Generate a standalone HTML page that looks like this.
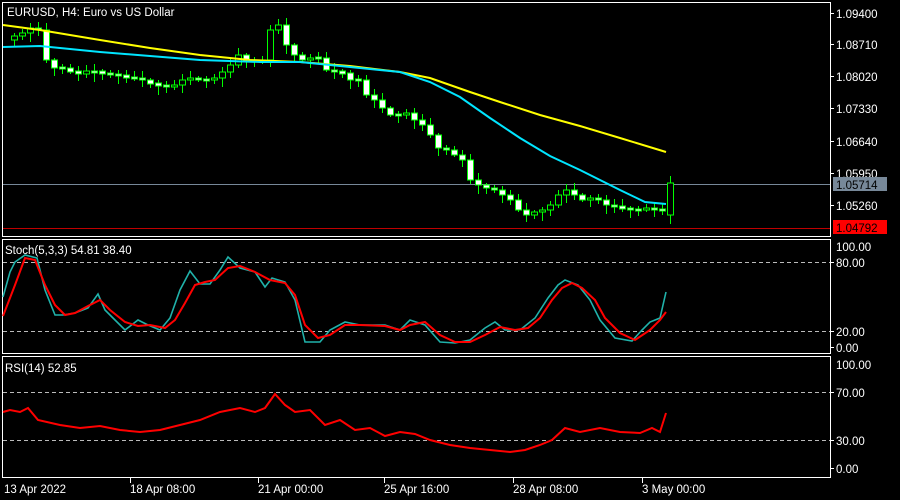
<!DOCTYPE html>
<html><head><meta charset="utf-8"><style>
body{margin:0;background:#000;width:900px;height:500px;overflow:hidden}
svg{display:block}
text{font-family:"Liberation Sans",sans-serif;font-size:11.5px;fill:#fff}
</style></head><body>
<svg id="s" width="900" height="500" xmlns="http://www.w3.org/2000/svg">
<rect width="900" height="500" fill="#000"/>
<rect x="2.5" y="2.5" width="828" height="234" fill="none" stroke="#fff"/>
<rect x="2.5" y="239.5" width="828" height="114" fill="none" stroke="#fff"/>
<rect x="2.5" y="356.5" width="828" height="121" fill="none" stroke="#fff"/>
<line x1="3" y1="184.5" x2="830" y2="184.5" stroke="#778899"/>
<line x1="3" y1="228.5" x2="830" y2="228.5" stroke="#ff0000" stroke-width="0.8"/>
<g stroke="#bbb" stroke-dasharray="4,3">
<line x1="3" y1="262.5" x2="830" y2="262.5"/><line x1="3" y1="331.5" x2="830" y2="331.5"/>
<line x1="3" y1="392.5" x2="830" y2="392.5"/><line x1="3" y1="440.5" x2="830" y2="440.5"/>
</g>
<g id="candles"></g>
<polyline fill="none" stroke="#ffff00" stroke-width="2" points="3,25 40,30 100,40 150,48 200,55 250,60 300,62 350,66 400,72 430,78 470,92 500,102 540,115 580,126 620,138 666,152"/>
<polyline fill="none" stroke="#00e5ff" stroke-width="2" points="3,47 40,46 60,48 100,52 150,56 200,60 260,62 300,62 350,67 400,72 430,82 460,97 490,118 520,138 550,156 580,170 620,190 645,202 666,204"/>
<polyline fill="none" stroke="#20b2aa" stroke-width="1.6" points="3,297 10,272 15,262 25,255 37,258 45,290 55,315 63,315 75,313 88,308 98,294 105,310 115,320 125,330 138,320 148,325 160,330 170,318 180,290 190,271 200,284 210,284 220,270 228,257 240,268 255,272 265,287 272,278 285,282 295,300 305,342 320,342 330,330 345,322 360,325 385,325 400,330 410,320 425,325 440,342 455,343 470,340 485,328 495,322 505,330 520,330 535,318 548,298 558,285 565,280 578,285 590,300 600,320 615,338 632,341 642,330 650,322 660,318 666,292"/>
<polyline fill="none" stroke="#ff0000" stroke-width="2" points="3,316 15,285 25,258 35,260 45,285 55,305 65,315 75,313 88,306 100,300 110,310 125,322 138,326 150,325 165,328 175,320 185,303 195,285 205,282 215,280 228,268 240,266 255,272 270,280 285,283 295,295 305,325 318,338 330,335 345,325 360,325 385,326 400,330 410,325 425,322 440,335 455,342 470,342 485,335 500,327 515,330 528,328 540,318 552,300 562,288 572,283 582,288 595,300 605,318 620,333 635,340 650,330 660,320 666,312"/>
<polyline fill="none" stroke="#ff0000" stroke-width="2" points="3,412 10,410 20,412 28,408 38,420 60,425 80,428 100,426 120,430 140,432 160,430 180,425 200,420 220,412 240,408 255,412 265,408 275,394 285,405 295,412 310,410 325,425 340,420 355,430 370,428 385,436 400,432 415,434 430,440 450,445 470,448 490,450 510,452 525,450 540,445 552,440 565,428 580,432 600,428 620,432 640,433 652,428 660,432 666,413"/>
<g stroke="#fff">
<line x1="830" y1="13.5" x2="834" y2="13.5"/><line x1="830" y1="44.5" x2="834" y2="44.5"/><line x1="830" y1="76.5" x2="834" y2="76.5"/><line x1="830" y1="108.5" x2="834" y2="108.5"/><line x1="830" y1="141.5" x2="834" y2="141.5"/><line x1="830" y1="173.5" x2="834" y2="173.5"/><line x1="830" y1="205.5" x2="834" y2="205.5"/>
<line x1="830" y1="262.5" x2="834" y2="262.5"/><line x1="830" y1="331.5" x2="834" y2="331.5"/><line x1="830" y1="347.5" x2="834" y2="347.5"/>
<line x1="830" y1="392.5" x2="834" y2="392.5"/><line x1="830" y1="440.5" x2="834" y2="440.5"/><line x1="830" y1="468.5" x2="834" y2="468.5"/>
<line x1="130.5" y1="478" x2="130.5" y2="483"/><line x1="258.5" y1="478" x2="258.5" y2="483"/><line x1="384.5" y1="478" x2="384.5" y2="483"/><line x1="513.5" y1="478" x2="513.5" y2="483"/><line x1="642.5" y1="478" x2="642.5" y2="483"/>
</g>
<g>
<text x="836" y="18">1.09400</text><text x="836" y="49">1.08710</text><text x="836" y="81">1.08020</text><text x="836" y="113">1.07330</text><text x="836" y="146">1.06640</text><text x="836" y="178">1.05950</text><text x="836" y="210">1.05260</text>
<rect x="833" y="177" width="54" height="14" fill="#778899"/><text x="836" y="189" style="fill:#000">1.05714</text>
<rect x="833" y="220" width="54" height="14" fill="#ff0000"/><text x="836" y="232" style="fill:#000">1.04792</text>
<text x="836" y="251">100.00</text><text x="836" y="267">80.00</text><text x="836" y="336">20.00</text><text x="836" y="352">0.00</text>
<text x="836" y="369">100.00</text><text x="836" y="397">70.00</text><text x="836" y="445">30.00</text><text x="836" y="473">0.00</text>
<text x="4" y="493">13 Apr 2022</text><text x="130" y="493">18 Apr 08:00</text><text x="258" y="493">21 Apr 00:00</text><text x="384" y="493">25 Apr 16:00</text><text x="513" y="493">28 Apr 08:00</text><text x="642" y="493">3 May 00:00</text>
<text x="7" y="16">EURUSD, H4:  Euro vs US Dollar</text>
<text x="5" y="254">Stoch(5,3,3) 54.81 38.40</text>
<text x="5" y="372">RSI(14) 52.85</text>
</g>
</svg>
<script>
var m=[40,36,33,28,30,60,68,68,72,73,72,72,73,75,75,78,78,80,84,85,87,85,80,78,80,80,78,72,65,55,60,62,60,30,25,45,55,60,58,58,70,72,73,80,80,95,100,108,115,115,113,120,125,135,148,150,155,160,180,185,188,190,195,200,210,215,212,210,205,195,190,195,200,198,200,205,207,208,210,210,208,210,210,190];
var g=document.getElementById('candles'),h='';
for(var i=1;i<m.length;i++){var x=6+i*8,o=m[i-1],c=m[i];if(i==m.length-1){o=215;c=183;}
var t=Math.min(o,c),b=Math.max(o,c);if(b-t<2){t-=1;b+=1;}
var hi=t-2-(i*7%6),lo=b+2+(i*5%8);
h+='<line x1="'+(x+.5)+'" y1="'+hi+'" x2="'+(x+.5)+'" y2="'+lo+'" stroke="#00ff00"/>';
h+='<rect x="'+(x-2.5)+'" y="'+t+'" width="6" height="'+(b-t)+'" fill="'+(c<o?'#000':'#fff')+'" stroke="#00ff00"/>';}
g.innerHTML=h;
</script>
</body></html>
